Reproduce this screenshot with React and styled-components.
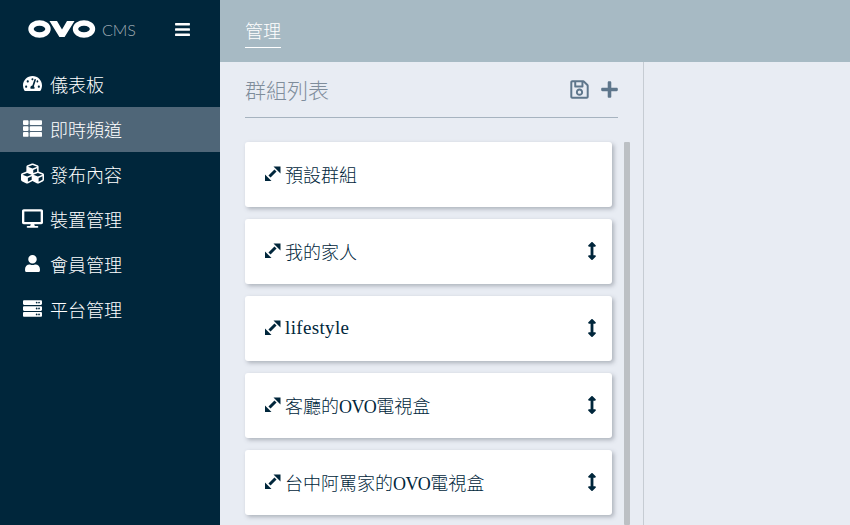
import React from "react";
import styled, { createGlobalStyle } from "styled-components";
import { FaTachometerAlt, FaThList, FaCubes, FaDesktop, FaUser, FaServer, FaBars, FaPlus, FaRegSave, FaArrowsAltV } from "react-icons/fa";

const Global = createGlobalStyle`
  html, body { margin: 0; padding: 0; height: 525px; overflow: hidden; }
  body { font-family: "Liberation Serif", "Noto Sans CJK TC", serif; }
  * { box-sizing: border-box; }
`;
const Page = styled.div`display: grid; grid-template-columns: 220px 1fr; width: 850px; height: 525px; overflow: hidden; background: #e8ecf3;`;
const Sidebar = styled.aside`background: #00263b; color: #fff; display: flex; flex-direction: column;`;
const Brand = styled.div`height: 62px; display: flex; align-items: center; padding: 0 0 4px 28px;`;
const Cms = styled.span`font-family: "Lato", sans-serif; font-size: 16px; color: #a3aeb6; margin-left: 6px; font-weight: 300;`;
const Burger = styled.span`margin-left: auto; margin-right: 29px; display: flex; font-size: 17px; color: #fff;`;
const MenuItem = styled.div`
  height: 45px; display: flex; align-items: center; font-size: 18px; padding-bottom: 2px;
  font-family: "Noto Sans CJK TC", sans-serif; font-weight: 300;
  background: ${p => (p.$active ? "#4f6678" : "transparent")};
`;
const MenuIcon = styled.span`width: 50px; padding-left: 15px; display: flex; justify-content: center; font-size: ${p => p.$size || 18}px;`;
const Main = styled.main`display: flex; flex-direction: column; min-width: 0;`;
const TopBar = styled.header`height: 62px; background: #a7bac4; padding: 18px 0 0 25px; flex: none;`;
const Tab = styled.span`display: inline-block; color: #fff; font-size: 18px; line-height: 24px; height: 30px; border-bottom: 1px solid #fff; font-family: "Noto Sans CJK TC", sans-serif; font-weight: 300;`;
const Body = styled.div`flex: 1; display: flex; min-height: 0;`;
const Pane = styled.section`width: 424px; border-right: 1px solid #c6ccd3; padding-left: 25px; display: flex; flex-direction: column; overflow: hidden;`;
const PaneHead = styled.div`width: 373px; height: 56px; border-bottom: 1px solid #a6b3bf; display: flex; align-items: center; justify-content: space-between; flex: none; padding-bottom: 1px;`;
const PaneTitle = styled.h2`margin: 0; font-size: 21px; font-weight: 300; color: #7f8d9b; font-family: "Noto Sans CJK TC", sans-serif;`;
const Actions = styled.div`display: flex; align-items: center; gap: 10px; color: #5e768b; margin-right: -1px;`;
const ActionIcon = styled.span`display: flex; font-size: ${p => p.$size}px;`;
const ListWrap = styled.div`display: flex; gap: 12px; margin-top: 24px; flex: 1; min-height: 0;`;
const List = styled.div`width: 367px; display: flex; flex-direction: column; gap: 12px; flex: none;`;
const Scroll = styled.div`width: 6px; background: #bcc0c4; flex: none; border-radius: 1px;`;
const Card = styled.div`height: 65px; flex: none; background: #fff; border-radius: 3px; box-shadow: 2px 2px 4px rgba(60,70,80,.35); display: flex; align-items: center; padding: 0 11px 0 19px; color: #00263b; font-size: 18px; font-weight: 300;`;
const Expand = styled.svg`width: 17px; height: 17px; margin-right: 4px; flex: none; position: relative; top: -1px;`;
const Label = styled.span`flex: 1; position: relative; top: -1px;`;
const Latin = styled.span`font-size: ${p => p.$size}px; letter-spacing: ${p => p.$track}px;`;
const Grip = styled.span`display: flex; font-size: 18px; position: relative; top: -1px;`;
const Detail = styled.div`flex: 1;`;

const LogoMark = () => (
  <svg width="68" height="18" viewBox="0 0 68 18" aria-hidden="true">
    <ellipse cx="11.5" cy="9" rx="8.5" ry="6" fill="none" stroke="#fff" strokeWidth="5.4" />
    <path d="M21.5 1 h7.5 l5 8.4 5-8.4 h7.5 L36.6 17 h-5.2z" fill="#fff" />
    <ellipse cx="56" cy="9" rx="8.5" ry="6" fill="none" stroke="#fff" strokeWidth="5.4" />
  </svg>
);

const ExpandGlyph = () => (
  <Expand viewBox="0 0 17 17" aria-hidden="true">
    <path d="M5.5 11.5 L11.5 5.5" stroke="#00263b" strokeWidth="3" fill="none" />
    <path d="M9.5 1.5 h7 v7z M7.5 16 h-6.5 v-6.5z" fill="#00263b" />
  </Expand>
);

const menu = [
  [FaTachometerAlt, "儀表板", false, 19],
  [FaThList, "即時頻道", true, 19],
  [FaCubes, "發布內容", false, 23],
  [FaDesktop, "裝置管理", false, 21],
  [FaUser, "會員管理", false, 17],
  [FaServer, "平台管理", false, 19],
];
const ovo = <Latin $size={18} $track={-0.6}>OVO</Latin>;
const groups = [
  ["a", "預設群組"],
  ["b", "我的家人"],
  ["c", <Latin $size={19} $track={0.35}>lifestyle</Latin>],
  ["d", <>客廳的{ovo}電視盒</>],
  ["e", <>台中阿罵家的{ovo}電視盒</>],
];

export default function App() {
  return (
    <Page>
      <Global />
      <Sidebar>
        <Brand>
          <LogoMark />
          <Cms>CMS</Cms>
          <Burger><FaBars /></Burger>
        </Brand>
        {menu.map(([Icon, text, active, size]) => (
          <MenuItem key={text} $active={active}>
            <MenuIcon $size={size}><Icon /></MenuIcon>
            {text}
          </MenuItem>
        ))}
      </Sidebar>
      <Main>
        <TopBar><Tab>管理</Tab></TopBar>
        <Body>
          <Pane>
            <PaneHead>
              <PaneTitle>群組列表</PaneTitle>
              <Actions>
                <ActionIcon $size={21}><FaRegSave /></ActionIcon>
                <ActionIcon $size={19}><FaPlus /></ActionIcon>
              </Actions>
            </PaneHead>
            <ListWrap>
              <List>
                {groups.map(([id, g], i) => (
                  <Card key={id}>
                    <ExpandGlyph />
                    <Label>{g}</Label>
                    {i > 0 && <Grip><FaArrowsAltV /></Grip>}
                  </Card>
                ))}
              </List>
              <Scroll />
            </ListWrap>
          </Pane>
          <Detail />
        </Body>
      </Main>
    </Page>
  );
}
